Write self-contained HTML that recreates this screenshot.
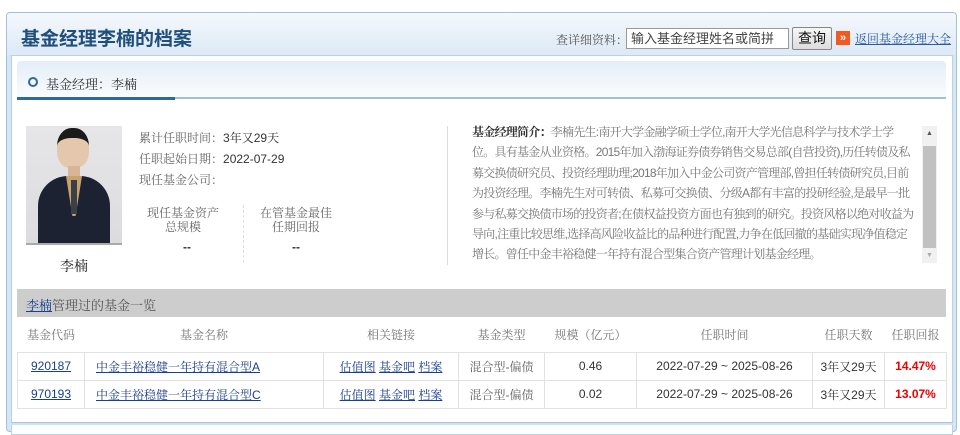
<!DOCTYPE html>
<html><head><meta charset="utf-8"><style>
*{margin:0;padding:0;box-sizing:border-box}
body{width:960px;height:425px;background:#fff;position:relative;overflow:hidden;font-family:"Liberation Sans","Noto Serif CJK SC","Noto Sans CJK SC",serif;font-size:12px;color:#333}
.a{position:absolute}
.sans{font-family:"Liberation Sans","Noto Sans CJK SC",sans-serif}
a{color:#1a3f8f;text-decoration:underline}
table{border-collapse:collapse;position:absolute;left:17px;top:317px;width:929px;table-layout:fixed}
td{border:1px solid #e2e2e2;text-align:center;height:28px;font-size:12px}
tr.h td{height:35px;color:#777;border-top:none;border-left:none;border-right:none}
.num{font-family:"Liberation Sans",sans-serif}
.bio div{white-space:nowrap;letter-spacing:-0.75px}
</style></head><body>
<div class="a" style="left:6px;top:12px;width:951px;height:420px;border:1px solid #9fc2de;border-radius:4px;background:#d5e6f4"></div>
<div class="a" style="left:7px;top:13px;width:949px;height:42px;background:linear-gradient(#f4f8fc,#dde9f5);border-radius:3px 3px 0 0"></div>
<div class="a sans" style="left:21px;top:24px;font-size:19px;font-weight:bold;color:#1f4f7a">基金经理李楠的档案</div>
<div class="a" style="left:556px;top:31px;color:#555;font-size:12px">查详细资料：</div>
<div class="a sans" style="left:626px;top:28px;width:163px;height:21px;border:1px solid #999;background:#fff;font-size:13px;color:#444;padding:1px 4px;line-height:18px">输入基金经理姓名或简拼</div>
<div class="a sans" style="left:792px;top:27px;width:40px;height:23px;border:1px solid #888;border-radius:2px;background:linear-gradient(#f6f6f6,#ddd);font-size:14px;text-align:center;line-height:21px;color:#111">查询</div>
<div class="a" style="left:836px;top:31px;width:14px;height:14px;background:#f25a1f;color:#fff;font-size:11px;font-weight:bold;line-height:14px;text-align:center">»</div>
<a class="a" style="left:855px;top:30px;font-size:12px;color:#2a5aa0">返回基金经理大全</a>
<div class="a" style="left:11px;top:55px;width:942px;height:380px;background:#fff;border:1px solid #b9d2e6"></div>
<div class="a" style="left:17px;top:61px;width:929px;height:38px;background:linear-gradient(#e3edf7,#fafcfe);border-radius:4px 4px 0 0;border-bottom:2px solid #9cc0de"></div>
<div class="a" style="left:17px;top:97px;width:158px;height:3px;background:#2e6a98"></div>
<div class="a" style="left:28px;top:77px;width:10px;height:10px;border:2px solid #2e6a98;border-radius:50%"></div>
<div class="a" style="left:46px;top:74px;font-size:13px;color:#333">基金经理：李楠</div>
<div class="a" style="left:26px;top:126px;width:96px;height:119px;background:linear-gradient(#e6e6e8,#dcdcde)"></div>
<div class="a" style="left:57px;top:128px;width:32px;height:40px;background:#e5c7ad;border-radius:45% 45% 40% 40%;border-top:10px solid #1b1b1b"></div>
<div class="a" style="left:68px;top:166px;width:12px;height:12px;background:#d9b598"></div>
<div class="a" style="left:38px;top:176px;width:72px;height:68px;background:#1d2233;border-radius:30px 30px 0 0"></div>
<div class="a" style="left:66px;top:176px;width:16px;height:40px;background:#c9a36f;clip-path:polygon(0 0,100% 0,60% 100%,40% 100%)"></div>
<div class="a" style="left:71px;top:180px;width:6px;height:34px;background:#3a3f48"></div>
<div class="a" style="left:26px;top:243px;width:96px;height:2px;background:#aaa"></div>
<div class="a" style="left:60px;top:256px;font-size:14px;color:#222">李楠</div>
<div class="a" style="left:139px;top:128px;line-height:21px;color:#666">累计任职时间：<span class="num" style="color:#333">3</span><span style="color:#333">年又</span><span class="num" style="color:#333">29</span><span style="color:#333">天</span><br>任职起始日期：<span class="num" style="color:#333">2022-07-29</span><br>现任基金公司：</div>
<div class="a" style="left:143px;top:206px;width:80px;text-align:center;color:#666;line-height:14px">现任基金资产<br>总规模</div>
<div class="a" style="left:243px;top:205px;height:58px;border-left:1px dashed #ddd"></div>
<div class="a" style="left:256px;top:206px;width:80px;text-align:center;color:#666;line-height:14px">在管基金最佳<br>任期回报</div>
<div class="a" style="left:183px;top:240px;font-weight:bold">--</div>
<div class="a" style="left:292px;top:240px;font-weight:bold">--</div>
<div class="a" style="left:447px;top:126px;height:139px;border-left:1px solid #ddd"></div>
<div class="a bio" style="left:472px;top:122px;width:450px;line-height:20.4px;color:#777;font-size:12px">
<div><b style="color:#333">基金经理简介：</b>李楠先生:南开大学金融学硕士学位,南开大学光信息科学与技术学士学</div>
<div>位。具有基金从业资格。<span class="num">2015</span>年加入渤海证券债券销售交易总部(自营投资),历任转债及私</div>
<div>募交换债研究员、投资经理助理;<span class="num">2018</span>年加入中金公司资产管理部,曾担任转债研究员,目前</div>
<div>为投资经理。李楠先生对可转债、私募可交换债、分级<span class="num">A</span>都有丰富的投研经验,是最早一批</div>
<div>参与私募交换债市场的投资者;在债权益投资方面也有独到的研究。投资风格以绝对收益为</div>
<div>导向,注重比较思维,选择高风险收益比的品种进行配置,力争在低回撤的基础实现净值稳定</div>
<div>增长。曾任中金丰裕稳健一年持有混合型集合资产管理计划基金经理。</div>
</div>
<div class="a" style="left:922px;top:126px;width:15px;height:137px;background:#f1f1f1"></div>
<div class="a" style="left:923px;top:146px;width:13px;height:102px;background:#c1c1c1"></div>
<div class="a" style="left:926px;top:130px;font-size:7px;color:#555">▲</div>
<div class="a" style="left:926px;top:252px;font-size:7px;color:#aaa">▼</div>
<div class="a" style="left:17px;top:289px;width:929px;height:28px;background:#cdcdcd"></div>
<div class="a" style="left:26px;top:295px;font-size:13px;color:#555"><a style="color:#1a3f8f">李楠</a>管理过的基金一览</div>
<table>
<colgroup><col style="width:67px"><col style="width:239px"><col style="width:135px"><col style="width:86px"><col style="width:92px"><col style="width:176px"><col style="width:72px"><col style="width:62px"></colgroup>
<tr class="h"><td>基金代码</td><td>基金名称</td><td>相关链接</td><td>基金类型</td><td>规模（亿元）</td><td>任职时间</td><td>任职天数</td><td>任职回报</td></tr>
<tr><td class="num"><a>920187</a></td><td style="text-align:left;padding-left:11px"><a>中金丰裕稳健一年持有混合型<span class="num">A</span></a></td><td><a>估值图</a> <a>基金吧</a> <a>档案</a></td><td style="color:#666">混合型-偏债</td><td class="num">0.46</td><td class="num">2022-07-29 ~ 2025-08-26</td><td><span class="num">3</span>年又<span class="num">29</span>天</td><td class="num" style="color:#e00;font-weight:bold">14.47%</td></tr>
<tr><td class="num"><a>970193</a></td><td style="text-align:left;padding-left:11px"><a>中金丰裕稳健一年持有混合型<span class="num">C</span></a></td><td><a>估值图</a> <a>基金吧</a> <a>档案</a></td><td style="color:#666">混合型-偏债</td><td class="num">0.02</td><td class="num">2022-07-29 ~ 2025-08-26</td><td><span class="num">3</span>年又<span class="num">29</span>天</td><td class="num" style="color:#e00;font-weight:bold">13.07%</td></tr>
</table>
<div class="a" style="left:11px;top:422px;width:942px;height:3px;background:#cfe2f1;border-top:1px solid #a8c8e2"></div>
</body></html>
